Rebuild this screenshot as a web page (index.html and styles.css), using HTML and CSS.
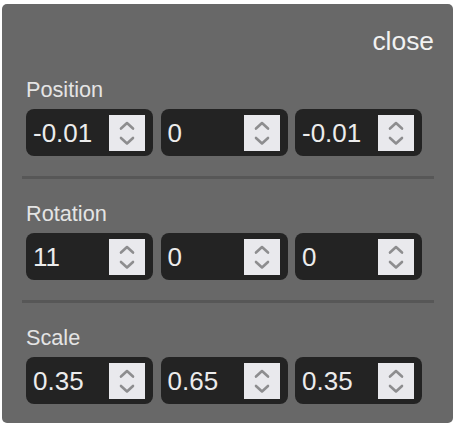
FILE: index.html
```html
<!DOCTYPE html>
<html>
<head>
<meta charset="utf-8">
<link rel="stylesheet" href="styles.css">
</head>
<body>
<div class="panel">
  <div class="header"><span class="close">close</span></div>

  <div class="section">
    <div class="label">Position</div>
    <div class="row">
      <div class="field"><span class="value">-0.01</span><span class="spin"><svg viewBox="0 0 36 36" width="36" height="36"><polyline points="12,13.5 18,8 24,13.5"/><polyline points="12,23 18,28.5 24,23"/></svg></span></div>
      <div class="field"><span class="value">0</span><span class="spin"><svg viewBox="0 0 36 36" width="36" height="36"><polyline points="12,13.5 18,8 24,13.5"/><polyline points="12,23 18,28.5 24,23"/></svg></span></div>
      <div class="field"><span class="value">-0.01</span><span class="spin"><svg viewBox="0 0 36 36" width="36" height="36"><polyline points="12,13.5 18,8 24,13.5"/><polyline points="12,23 18,28.5 24,23"/></svg></span></div>
    </div>
  </div>

  <div class="sep"></div>

  <div class="section">
    <div class="label">Rotation</div>
    <div class="row">
      <div class="field"><span class="value">11</span><span class="spin"><svg viewBox="0 0 36 36" width="36" height="36"><polyline points="12,13.5 18,8 24,13.5"/><polyline points="12,23 18,28.5 24,23"/></svg></span></div>
      <div class="field"><span class="value">0</span><span class="spin"><svg viewBox="0 0 36 36" width="36" height="36"><polyline points="12,13.5 18,8 24,13.5"/><polyline points="12,23 18,28.5 24,23"/></svg></span></div>
      <div class="field"><span class="value">0</span><span class="spin"><svg viewBox="0 0 36 36" width="36" height="36"><polyline points="12,13.5 18,8 24,13.5"/><polyline points="12,23 18,28.5 24,23"/></svg></span></div>
    </div>
  </div>

  <div class="sep"></div>

  <div class="section">
    <div class="label">Scale</div>
    <div class="row">
      <div class="field"><span class="value">0.35</span><span class="spin"><svg viewBox="0 0 36 36" width="36" height="36"><polyline points="12,13.5 18,8 24,13.5"/><polyline points="12,23 18,28.5 24,23"/></svg></span></div>
      <div class="field"><span class="value">0.65</span><span class="spin"><svg viewBox="0 0 36 36" width="36" height="36"><polyline points="12,13.5 18,8 24,13.5"/><polyline points="12,23 18,28.5 24,23"/></svg></span></div>
      <div class="field"><span class="value">0.35</span><span class="spin"><svg viewBox="0 0 36 36" width="36" height="36"><polyline points="12,13.5 18,8 24,13.5"/><polyline points="12,23 18,28.5 24,23"/></svg></span></div>
    </div>
  </div>
</div>
</body>
</html>
```

FILE: styles.css
```css
html, body {
  margin: 0;
  padding: 0;
  background: #ffffff;
}

body {
  font-family: "Liberation Sans", Arial, sans-serif;
}

.panel {
  box-sizing: border-box;
  margin: 4px 0 0 2px;
  width: 451px;
  height: 419px;
  padding: 22px 19px 19px 20px;
  background: #686868;
  border-radius: 5px;
}

.header {
  display: flex;
  justify-content: flex-end;
  height: 30px;
}

.close {
  font-size: 26.4px;
  line-height: 30px;
  color: #f2f2f2;
}

.section {
  padding-left: 4px;
}

.header + .section {
  margin-top: 22px;
}

.label {
  font-size: 21.7px;
  line-height: 24px;
  color: #e4e4e4;
}

.row {
  display: flex;
  gap: 7.5px;
  margin-top: 7px;
}

.field {
  box-sizing: border-box;
  width: 127px;
  height: 47px;
  display: flex;
  align-items: center;
  justify-content: space-between;
  padding: 0 8px 0 7px;
  background: #232323;
  border-radius: 8px;
}

.value {
  font-size: 26px;
  line-height: 30px;
  color: #ececec;
}

.spin {
  width: 36px;
  height: 36px;
  margin-top: 1px;
  background: #e9e9ed;
  display: flex;
}

.spin polyline {
  fill: none;
  stroke: #8d8d8f;
  stroke-width: 2.6;
  stroke-linecap: round;
  stroke-linejoin: round;
}

.sep {
  height: 3px;
  margin: 20px 0 23px;
  background: #575757;
}
```
